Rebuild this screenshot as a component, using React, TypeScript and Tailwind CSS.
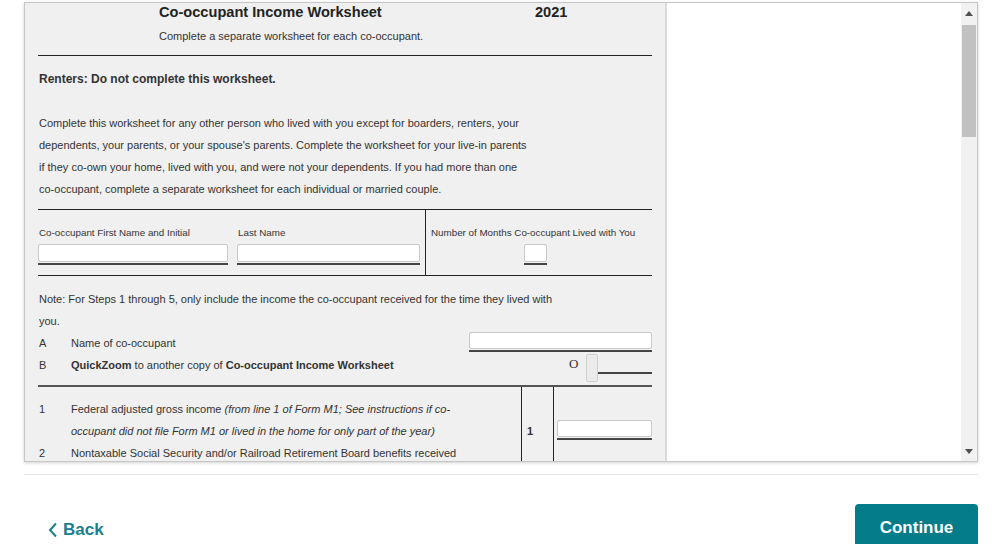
import React from "react";

const font = { fontFamily: '"Liberation Sans", Arial, Helvetica, sans-serif' };

function Field({ className = "" }: { className?: string }) {
  return (
    <div className={className}>
      <div className="h-[18px] rounded-[2px] border border-[#c9c9c9] bg-white" />
      <div className="mt-[1px] h-[2px] bg-[#444]" />
    </div>
  );
}

function Scrollbar() {
  return (
    <div className="flex w-[16px] flex-col bg-[#f1f1f1]">
      <div className="flex h-[20px] items-center justify-center">
        <svg width="8" height="5" viewBox="0 0 8 5">
          <path d="M0 5 L4 0 L8 5 Z" fill="#505050" />
        </svg>
      </div>
      <div className="mx-[1px] mt-[2px] h-[112px] bg-[#c1c1c1]" />
      <div className="flex-1" />
      <div className="flex h-[20px] items-center justify-center">
        <svg width="8" height="5" viewBox="0 0 8 5">
          <path d="M0 0 L8 0 L4 5 Z" fill="#505050" />
        </svg>
      </div>
    </div>
  );
}

function Worksheet() {
  return (
    <div className="w-[642px] shrink-0 overflow-hidden border-r-2 border-[#dadada] bg-[#f0f0f0] pl-[13px] pr-[13px] text-[#333]">
      <div className="flex h-[18px] items-center text-[14.6px] font-bold leading-[18px] text-[#222]">
        <span className="ml-[121px] w-[376px]">Co-occupant Income Worksheet</span>
        <span>2021</span>
      </div>
      <div className="ml-[121px] mt-[6px] h-[18px] text-[11px] leading-[18px]">
        Complete a separate worksheet for each co-occupant.
      </div>
      <div className="mt-[10px] h-[1px] bg-[#222]" />
      <div className="mt-[14px] h-[18px] pl-[1px] text-[12px] font-bold leading-[18px]">
        Renters: Do not complete this worksheet.
      </div>
      <div className="mt-[24px] pl-[1px] text-[11px] leading-[22px]">
        <div>Complete this worksheet for any other person who lived with you except for boarders, renters, your</div>
        <div>dependents, your parents, or your spouse's parents. Complete the worksheet for your live-in parents</div>
        <div>if they co-own your home, lived with you, and were not your dependents. If you had more than one</div>
        <div>co-occupant, complete a separate worksheet for each individual or married couple.</div>
      </div>

      <div className="mt-[9px] flex h-[67px] border-y border-[#222]">
        <div className="w-[388px] border-r border-[#222]">
          <div className="mt-[16px] flex h-[14px] items-center text-[9.8px] leading-[14px]">
            <span className="w-[199px] pl-[1px]">Co-occupant First Name and Initial</span>
            <span className="pl-[1px]">Last Name</span>
          </div>
          <div className="mt-[4px] flex">
            <Field className="w-[190px]" />
            <Field className="ml-[9px] w-[183px]" />
          </div>
        </div>
        <div className="flex-1">
          <div className="mt-[16px] h-[14px] pl-[5px] text-[9.8px] leading-[14px]">
            Number of Months Co-occupant Lived with You
          </div>
          <Field className="ml-[98px] mt-[4px] w-[23px]" />
        </div>
      </div>

      <div className="mt-[12px] pl-[1px] text-[11px] leading-[22px]">
        <div>Note: For Steps 1 through 5, only include the income the co-occupant received for the time they lived with</div>
        <div>you.</div>
        <div className="flex h-[22px] items-start">
          <span className="w-[32px] leading-[22px]">A</span>
          <span className="flex-1 leading-[22px]">Name of co-occupant</span>
          <Field className="w-[183px] [&>div:first-child]:h-[17px]" />
        </div>
        <div className="flex h-[28px] items-start">
          <span className="w-[32px] leading-[22px]">B</span>
          <span className="w-[500px] leading-[22px]">
            <b>QuickZoom</b> to another copy of <b>Co-occupant Income Worksheet</b>
          </span>
          <span className="ml-[-2px] mt-[1px] text-[13px] leading-[18px]" style={{ fontFamily: '"Liberation Serif", serif' }}>
            O
          </span>
          <div className="ml-[8px] h-[28px] w-[12px] rounded-[2px] border border-[#cfcfcf] bg-[#ebebeb]" />
          <div className="mt-[18px] h-[2px] flex-1 bg-[#444]" />
        </div>
      </div>
      <div className="mt-[3px] h-[2px] bg-[#555]" />

      <div className="flex h-[80px] text-[11px] leading-[22px]">
        <div className="w-[484px] pl-[1px] pt-[11px]">
          <div className="flex">
            <span className="w-[32px] shrink-0">1</span>
            <div>
              <div>
                Federal adjusted gross income <i>(from line 1 of Form M1; See instructions if co-</i>
              </div>
              <div>
                <i>occupant did not file Form M1 or lived in the home for only part of the year)</i>
              </div>
            </div>
          </div>
          <div className="flex">
            <span className="w-[32px] shrink-0">2</span>
            <span>Nontaxable Social Security and/or Railroad Retirement Board benefits received</span>
          </div>
        </div>
        <div className="w-[33px] border-x border-[#222] pl-[5px] pt-[33px] font-bold">1</div>
        <div className="flex-1 pl-[3px] pt-[33px]">
          <Field className="w-[95px] [&>div:first-child]:h-[17px]" />
        </div>
      </div>
    </div>
  );
}

export default function App() {
  return (
    <div className="h-[544px] w-[998px] overflow-hidden bg-white" style={font}>
      <div className="ml-[24px] mt-[2px] flex h-[460px] w-[954px] border border-[#c6c6c6] shadow-[0_1px_3px_rgba(0,0,0,0.18)]">
        <Worksheet />
        <div className="flex-1 bg-white" />
        <Scrollbar />
      </div>
      <div className="ml-[24px] mt-[12px] h-[1px] w-[954px] bg-[#e6e6e6]" />
      <div className="ml-[24px] mt-[29px] flex w-[954px] items-start justify-between">
        <button className="mt-[13px] flex items-center pl-[24px] text-[17px] font-bold text-[#1b7f8e]">
          <svg width="10" height="16" viewBox="0 0 10 16" className="mr-[5px]">
            <path d="M8 1.5 L2 8 L8 14.5" fill="none" stroke="#1b7f8e" strokeWidth="2" />
          </svg>
          Back
        </button>
        <button className="h-[48px] w-[123px] rounded-[4px] bg-[#047c8a] text-[17px] font-bold text-white">
          Continue
        </button>
      </div>
    </div>
  );
}
